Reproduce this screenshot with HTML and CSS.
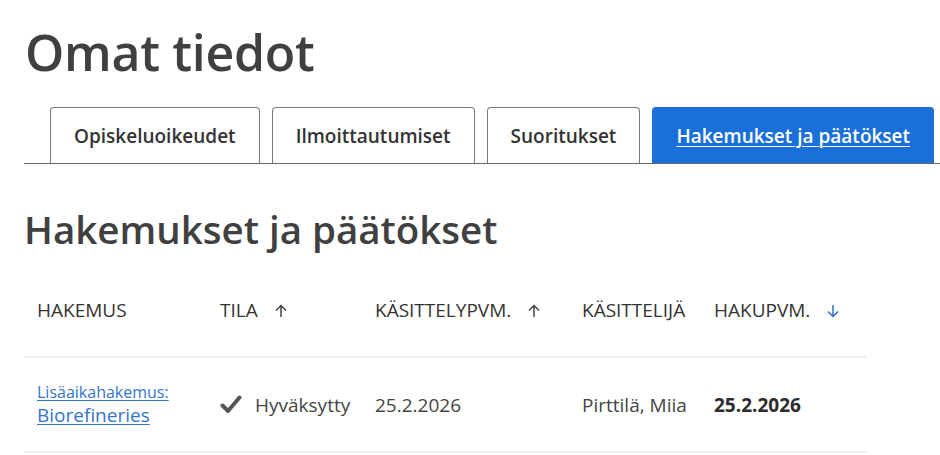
FILE: index.html
```html
<!DOCTYPE html>
<html lang="fi">
<head>
    <meta charset="UTF-8">
    <meta name="viewport" content="width=device-width, initial-scale=1.0">
    <title>Omat tiedot</title>
    <link rel="stylesheet" href="styles.css">
</head>
<body>
    <h1 class="page-title">Omat tiedot</h1>

    <nav class="tabs">
        <a class="tab" href="#">Opiskeluoikeudet</a>
        <a class="tab" href="#">Ilmoittautumiset</a>
        <a class="tab" href="#">Suoritukset</a>
        <a class="tab active" href="#">Hakemukset ja päätökset</a>
    </nav>

    <h2 class="section-title">Hakemukset ja päätökset</h2>

    <table class="applications">
        <thead>
            <tr>
                <th class="col-hakemus">Hakemus</th>
                <th class="col-tila">Tila
                    <svg class="sort" viewBox="0 0 12 14" width="12" height="14"><path d="M6 13V1.5M1 6.5L6 1.5L11 6.5" fill="none" stroke="#444" stroke-width="1.5"/></svg>
                </th>
                <th class="col-kasittelypvm">Käsittelypvm.
                    <svg class="sort" viewBox="0 0 12 14" width="12" height="14"><path d="M6 13V1.5M1 6.5L6 1.5L11 6.5" fill="none" stroke="#444" stroke-width="1.5"/></svg>
                </th>
                <th class="col-kasittelija">Käsittelijä</th>
                <th class="col-hakupvm">Hakupvm.
                    <svg class="sort" viewBox="0 0 12 14" width="12" height="14"><path d="M6 1V12.5M1 7.5L6 12.5L11 7.5" fill="none" stroke="#2f6fc4" stroke-width="1.5"/></svg>
                </th>
            </tr>
        </thead>
        <tbody>
            <tr>
                <td>
                    <a class="app-link" href="#">
                        <span class="app-type">Lisäaikahakemus:</span>
                        <span class="app-name">Biorefineries</span>
                    </a>
                </td>
                <td>
                    <span class="status">
                        <svg class="check" viewBox="0 0 22 19" width="22" height="19">
                            <path d="M2.5 10.5L8 16L19.5 2.5" fill="none" stroke="#555" stroke-width="4" stroke-linecap="round" stroke-linejoin="round"/>
                        </svg>
                        Hyväksytty
                    </span>
                </td>
                <td>25.2.2026</td>
                <td>Pirttilä, Miia</td>
                <td class="strong">25.2.2026</td>
            </tr>
        </tbody>
    </table>
</body>
</html>
```

FILE: styles.css
```css
body {
    font-family: "Open Sans", "Noto Sans", sans-serif;
    color: #3c3c3c;
    margin: 0;
    padding: 0 0 0 24px;
    background: #fff;
}
.page-title {
    font-size: 50px;
    font-weight: 600;
    margin: 0;
    padding: 16px 0 0 1px;
    line-height: 72px;
    color: #404040;
    letter-spacing: -0.3px;
}
.tabs {
    display: flex;
    gap: 12px;
    margin-top: 19px;
    padding-left: 26px;
    border-bottom: 1px solid #6a6a6a;
}
.tab {
    flex-shrink: 0;
    white-space: nowrap;
    display: flex;
    align-items: center;
    height: 55px;
    padding: 0 23px;
    border: 1px solid #7a7a7a;
    border-bottom: none;
    border-radius: 4px 4px 0 0;
    color: #333;
    font-size: 19px;
    font-weight: 600;
    text-decoration: none;
}
.tab.active {
    background: #1b6fd8;
    border-color: #1b6fd8;
    color: #fff;
    text-decoration: underline;
    text-decoration-thickness: 1px;
    text-underline-offset: 3px;
}
.section-title {
    font-size: 38.5px;
    font-weight: 600;
    margin: 0;
    padding-top: 38px;
    line-height: 54px;
    color: #404040;
}
.applications {
    border-collapse: collapse;
    margin-top: 41px;
    width: 843px;
    table-layout: fixed;
}
.applications th {
    box-sizing: border-box;
    text-align: left;
    vertical-align: top;
    font-weight: 400;
    text-transform: uppercase;
    font-size: 19px;
    color: #333;
    padding: 0 0 0 13px;
    height: 60px;
    border-bottom: 2px solid #eeeeee;
    white-space: nowrap;
}
.col-hakemus { width: 183px; }
.col-tila { width: 155px; }
.col-kasittelypvm { width: 207px; }
.col-kasittelija { width: 132px; }
.col-hakupvm { width: 166px; }
.sort {
    margin-left: 12px;
    vertical-align: -1px;
}
.applications td {
    padding: 0 0 0 13px;
    height: 93px;
    font-size: 19px;
    color: #444;
    border-bottom: 2px solid #eeeeee;
    vertical-align: middle;
}
.applications td.strong {
    font-weight: 700;
    color: #2c2c2c;
}
.app-link {
    color: #3574c8;
    text-decoration: underline;
    text-underline-offset: 2px;
}
.app-type {
    display: block;
    font-size: 16px;
    line-height: 22px;
}
.app-name {
    display: block;
    font-size: 19px;
    line-height: 25px;
}
.status {
    display: flex;
    align-items: center;
    gap: 13px;
}
```
